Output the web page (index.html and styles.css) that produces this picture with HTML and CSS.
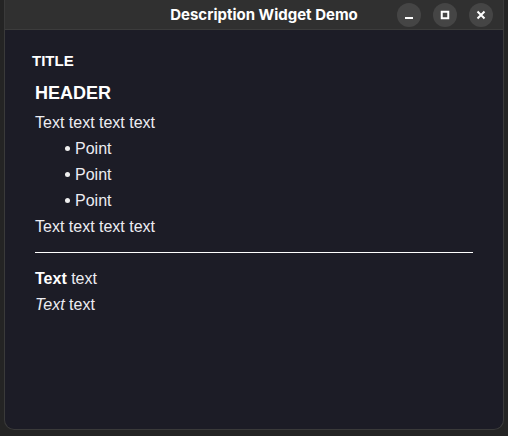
FILE: index.html
```html
<!DOCTYPE html>
<html>
<head>
<meta charset="utf-8">
<link rel="stylesheet" href="styles.css">
</head>
<body>
<div class="window">
  <div class="titlebar">
    <div class="title">Description Widget Demo</div>
    <div class="controls">
      <div class="btn"><svg width="10" height="10" viewBox="0 0 10 10"><rect x="1" y="7" width="8" height="2" fill="#fff"/></svg></div>
      <div class="btn"><svg width="10" height="10" viewBox="0 0 10 10"><rect x="1.75" y="1.75" width="6.5" height="6.5" fill="none" stroke="#fff" stroke-width="2"/></svg></div>
      <div class="btn"><svg width="10" height="10" viewBox="0 0 10 10"><path d="M1.5 1.5 L8.5 8.5 M8.5 1.5 L1.5 8.5" stroke="#fff" stroke-width="2"/></svg></div>
    </div>
  </div>
  <div class="content">
    <div class="wtitle">TITLE</div>
    <div class="body">
      <div class="header">HEADER</div>
      <p class="line">Text text text text</p>
      <ul class="points">
        <li class="line">Point</li>
        <li class="line">Point</li>
        <li class="line">Point</li>
      </ul>
      <p class="line">Text text text text</p>
      <hr class="divider">
      <p class="line"><b>Text</b> text</p>
      <p class="line"><i>Text</i> text</p>
    </div>
  </div>
</div>
</body>
</html>
```
FILE: styles.css
```css
html, body {
  margin: 0;
  padding: 0;
  background: #242424;
  width: 508px;
  height: 436px;
  overflow: hidden;
}
.window {
  margin: 0 4px 0 4px;
  height: 430px;
  display: flex;
  flex-direction: column;
  border-radius: 0 0 10px 10px;
  overflow: hidden;
  background: #1c1c26;
  border: 1px solid #3a3a3a;
  border-top: none;
  box-sizing: border-box;
}
.titlebar {
  height: 29px;
  background: #303030;
  border-bottom: 1px solid #3c3c3c;
  display: flex;
  align-items: center;
  justify-content: center;
  position: relative;
  flex-shrink: 0;
}
.title {
  font-family: "Inter", "Open Sans", sans-serif;
  font-weight: 700;
  font-size: 15px;
  color: #ffffff;
  margin-left: 20px;
}
.controls {
  position: absolute;
  right: 10px;
  top: 0;
  bottom: 0;
  display: flex;
  align-items: center;
  gap: 12px;
}
.btn {
  width: 24px;
  height: 24px;
  border-radius: 50%;
  background: #454545;
  display: flex;
  align-items: center;
  justify-content: center;
}
.content {
  flex: 1;
  padding: 22px 30px 0 27px;
  font-family: "Liberation Sans", Arial, sans-serif;
  color: #ececf2;
}
.wtitle {
  font-weight: 700;
  font-size: 15px;
  color: #fff;
  line-height: 18px;
  margin-bottom: 11px;
}
.body {
  padding-left: 3px;
}
.header {
  font-weight: 700;
  font-size: 18px;
  line-height: 24px;
  color: #fff;
  margin-bottom: 5px;
}
.line {
  margin: 0;
  font-size: 16px;
  line-height: 26px;
}
.points {
  margin: 0;
  padding: 0 0 0 30px;
  list-style: none;
}
.points li::before {
  content: "";
  display: inline-block;
  width: 5px;
  height: 5px;
  border-radius: 50%;
  background: #eee;
  margin: 0 5px 3px 0;
  vertical-align: middle;
}
.divider {
  border: none;
  border-top: 1px solid #ffffff;
  margin: 12px 0 13px 0;
}
b { color: #fff; }
```
